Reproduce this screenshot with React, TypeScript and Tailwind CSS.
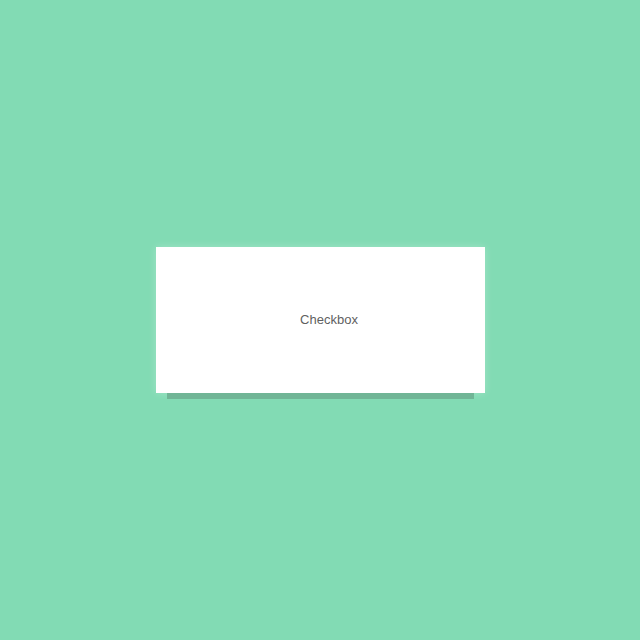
export default function App() {
  return (
    <div className="w-[640px] h-[640px] bg-[#82dbb4] flex items-center justify-center" style={{ fontFamily: '"Liberation Sans", Arial, sans-serif' }}>
      <div className="w-[329px] h-[146px] bg-white flex items-center justify-center shadow-[0_17px_0_-11px_#70b596,0_0_8px_rgba(255,255,255,0.25)]">
        <span className="pl-[18px] text-[13px] text-[#5f5f5f]">Checkbox</span>
      </div>
    </div>
  );
}
